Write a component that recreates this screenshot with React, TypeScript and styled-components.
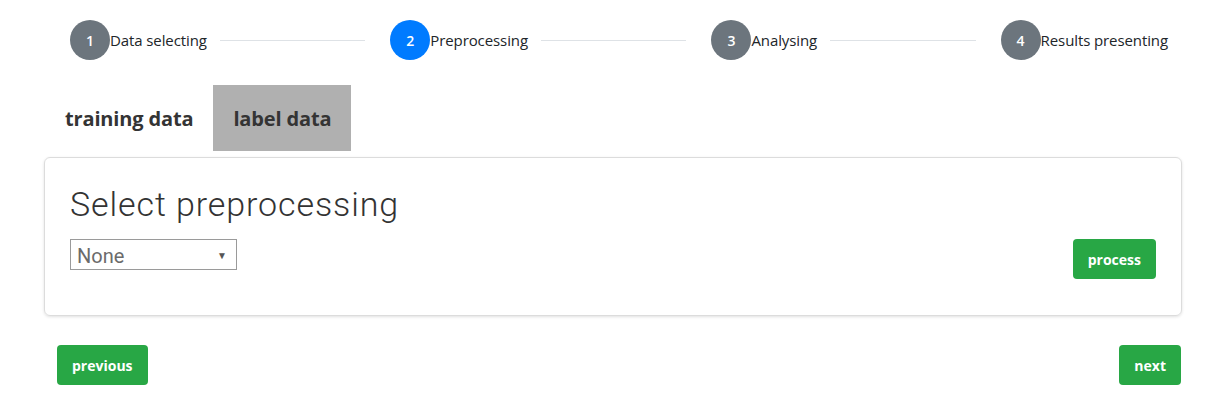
import React from "react";
import styled, { createGlobalStyle } from "styled-components";

const GlobalStyle = createGlobalStyle`
  body {
    margin: 0;
    background: #ffffff;
    font-family: "Open Sans", "Noto Sans", sans-serif;
    color: #212529;
  }
`;

export const Page = styled.div`
  width: 1216px;
  height: 404px;
  box-sizing: border-box;
  padding-top: 20px;
`;

export const Stepper = styled.div`
  display: flex;
  align-items: center;
  padding: 0 48px 0 70px;
`;

export const Step = styled.div`
  display: flex;
  align-items: center;
`;

export const Circle = styled.div<{ $active?: boolean }>`
  width: 40px;
  height: 40px;
  border-radius: 50%;
  background: ${(p) => (p.$active ? "#007bff" : "#6c757d")};
  color: #ffffff;
  display: flex;
  align-items: center;
  justify-content: center;
  font-size: 14px;
  font-weight: 600;
`;

export const StepLabel = styled.span`
  font-size: 15px;
  color: #212529;
  letter-spacing: -0.1px;
`;

export const Connector = styled.div`
  flex: 1;
  height: 1px;
  background: #dee2e6;
  margin: 0 25px 0 13px;
`;

export const Tabs = styled.div`
  display: flex;
  margin: 25px 0 0 45px;
`;

export const Tab = styled.div<{ $selected?: boolean }>`
  height: 66px;
  padding: 0 20px;
  display: flex;
  align-items: center;
  font-size: 20px;
  font-weight: 700;
  letter-spacing: -0.15px;
  color: #343434;
  background: ${(p) => (p.$selected ? "#b0b0b0" : "transparent")};
`;

export const Card = styled.div`
  margin: 6px 34px 0 44px;
  height: 159px;
  box-sizing: border-box;
  border: 1px solid #dcdcdc;
  border-radius: 6px;
  box-shadow: 0 1px 3px rgba(0, 0, 0, 0.12);
  padding: 22px 25px 0 25px;
`;

export const Title = styled.h2`
  margin: 0;
  font-family: Roboto, sans-serif;
  font-weight: 300;
  font-size: 34px;
  letter-spacing: 0.9px;
  line-height: 48px;
  color: #333333;
`;

export const Controls = styled.div`
  display: flex;
  justify-content: space-between;
  align-items: flex-start;
  margin-top: 11px;
`;

export const SelectBox = styled.div`
  width: 167px;
  height: 31px;
  box-sizing: border-box;
  border: 1px solid #9a9a9a;
  display: flex;
  align-items: center;
  justify-content: space-between;
  padding: 2px 9px 0 6px;
  font-family: Roboto, sans-serif;
  font-size: 20px;
  color: #6b6b6b;
`;

export const Arrow = styled.span`
  font-size: 10px;
  color: #555555;
`;

export const Button = styled.button`
  height: 40px;
  padding: 0 15px;
  border: none;
  border-radius: 4px;
  background: #28a745;
  color: #ffffff;
  font-family: "Open Sans", sans-serif;
  font-weight: 700;
  font-size: 14px;
  cursor: pointer;
`;

export const Footer = styled.div`
  display: flex;
  justify-content: space-between;
  margin: 29px 35px 0 57px;
`;

const steps = ["Data selecting", "Preprocessing", "Analysing", "Results presenting"];

export default function App() {
  return (
    <>
      <GlobalStyle />
      <Page>
        <Stepper>
          {steps.map((label, i) => (
            <React.Fragment key={label}>
              <Step>
                <Circle $active={i === 1}>{i + 1}</Circle>
                <StepLabel>{label}</StepLabel>
              </Step>
              {i < steps.length - 1 && <Connector />}
            </React.Fragment>
          ))}
        </Stepper>
        <Tabs>
          <Tab>training data</Tab>
          <Tab $selected>label data</Tab>
        </Tabs>
        <Card>
          <Title>Select preprocessing</Title>
          <Controls>
            <SelectBox>
              None
              <Arrow>▼</Arrow>
            </SelectBox>
            <Button>process</Button>
          </Controls>
        </Card>
        <Footer>
          <Button>previous</Button>
          <Button>next</Button>
        </Footer>
      </Page>
    </>
  );
}
